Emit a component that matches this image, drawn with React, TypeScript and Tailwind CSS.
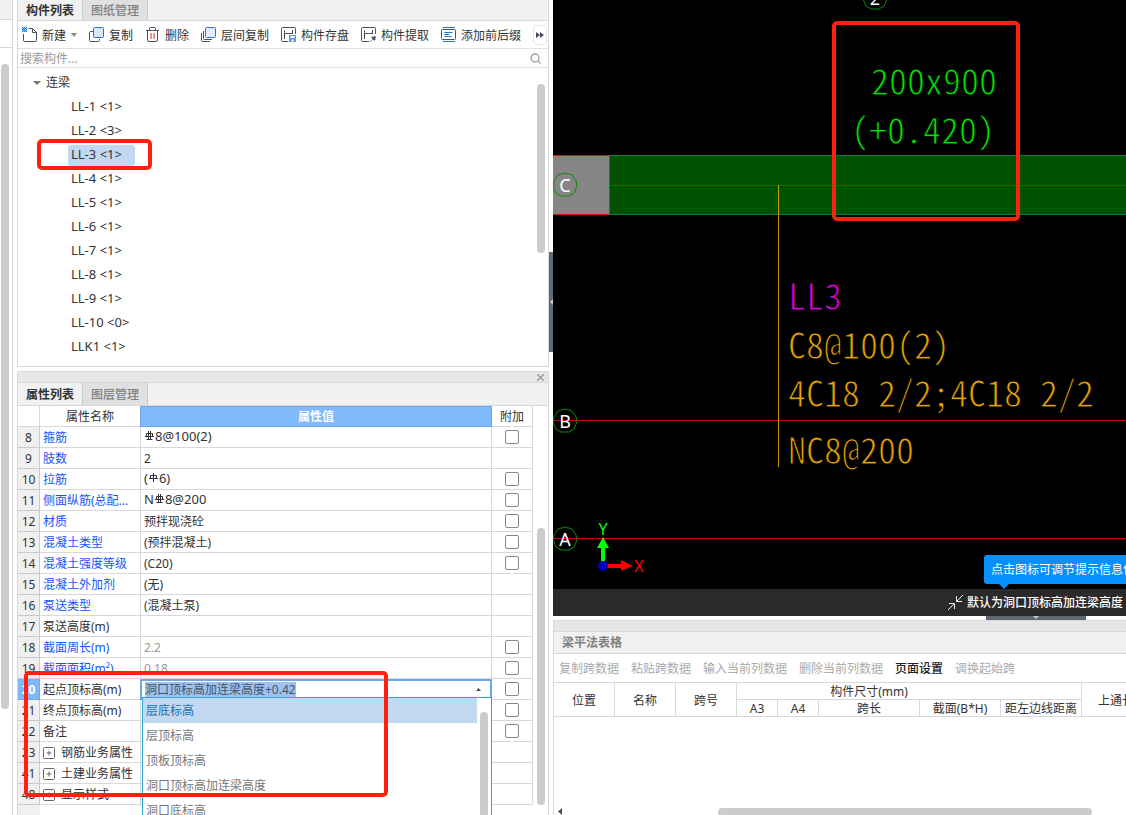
import { useEffect, useRef, useState } from 'react'
import type { ReactNode } from 'react'

const components = [
  'LL-1 <1>', 'LL-2 <3>', 'LL-3 <1>', 'LL-4 <1>', 'LL-5 <1>', 'LL-6 <1>',
  'LL-7 <1>', 'LL-8 <1>', 'LL-9 <1>', 'LL-10 <0>', 'LLK1 <1>',
]

interface PropertyRow {
  no: number
  name: string
  value?: ReactNode
  blue?: boolean
  muted?: boolean
  extra?: boolean
  group?: boolean
  editing?: boolean
}

const options = ['层底标高', '层顶标高', '顶板顶标高', '洞口顶标高加连梁高度', '洞口底标高']

// 钢筋等级符号
function Rebar({ grade }: { grade: 1 | 3 }) {
  return (
    <svg className="mx-px mb-[5px] inline-block h-[10px] w-[9px] align-middle" viewBox="0 0 9 10" fill="none" stroke="#333">
      <path d="M1.5 2.5h6v3h-6zM0 5.5h2M7 5.5h2" />
      {grade === 1 ? <path d="M4.5 0v9" /> : <path d="M3.5 0v9M5.5 0v9M1.5 8.5h6" />}
    </svg>
  )
}

const rows: PropertyRow[] = [
  { no: 8, name: '箍筋', value: <><Rebar grade={3} />8@100(2)</>, blue: true, extra: true },
  { no: 9, name: '肢数', value: '2', blue: true },
  { no: 10, name: '拉筋', value: <>(<Rebar grade={1} />6)</>, blue: true, extra: true },
  { no: 11, name: '侧面纵筋(总配...', value: <>N<Rebar grade={3} />8@200</>, blue: true, extra: true },
  { no: 12, name: '材质', value: '预拌现浇砼', blue: true, extra: true },
  { no: 13, name: '混凝土类型', value: '(预拌混凝土)', blue: true, extra: true },
  { no: 14, name: '混凝土强度等级', value: '(C20)', blue: true, extra: true },
  { no: 15, name: '混凝土外加剂', value: '(无)', blue: true },
  { no: 16, name: '泵送类型', value: '(混凝土泵)', blue: true },
  { no: 17, name: '泵送高度(m)' },
  { no: 18, name: '截面周长(m)', value: '2.2', blue: true, muted: true, extra: true },
  { no: 19, name: '截面面积(m²)', value: '0.18', blue: true, muted: true, extra: true },
  { no: 20, name: '起点顶标高(m)', editing: true, extra: true },
  { no: 21, name: '终点顶标高(m)', extra: true },
  { no: 22, name: '备注', extra: true },
  { no: 23, name: '钢筋业务属性', group: true },
  { no: 41, name: '土建业务属性', group: true },
  { no: 48, name: '显示样式', group: true },
]

function Icon({ children }: { children: ReactNode }) {
  return (
    <svg className="size-4 shrink-0" viewBox="0 0 16 16" fill="none" stroke="#4a5060">
      {children}
    </svg>
  )
}

const NewIcon = () => (
  <Icon>
    <path d="M6.5 1.500h4l4 4v8a1 1 0 0 1-1 1h-11a1 1 0 0 1-1-1V7M10.500 1.500v4h4" />
    <path d="M0 0h5v5H0z" fill="#a9cbf5" stroke="none" />
    <path d="M0 .5h1M2 .5h1M4 .5h1M1 1.500h1M3 1.500h1M0 2.500h1M2 2.500h1M4 2.500h1M1 3.500h1M3 3.500h1M0 4.500h1M2 4.500h1M4 4.500h1" stroke="#1a6fe0" />
  </Icon>
)

const CopyIcon = () => (
  <Icon>
    <path d="M4 4.500H1.500a1 1 0 0 0-1 1v8a1 1 0 0 0 1 1h8a1 1 0 0 0 1-1V12" />
    <rect x="4.500" y=".5" width="10" height="10" rx="1" fill="#dbe8fb" stroke="#2a73dc" />
  </Icon>
)

const TrashIcon = () => (
  <Icon>
    <path d="M1 3.500h13M4.500 3V1.500a1 1 0 0 1 1-1h4a1 1 0 0 1 1 1V3M2.500 4v9a1.500 1.500 0 0 0 1.500 1.500h7a1.500 1.500 0 0 0 1.500-1.500V4" />
    <path d="M6 6v6M9 6v6" stroke="#e02020" />
  </Icon>
)

const LayerCopyIcon = () => (
  <Icon>
    <path d="M.5 6v7.500a1 1 0 0 0 1 1H9M2.500 4v7.500a1 1 0 0 0 1 1H11" />
    <rect x="4.500" y=".5" width="10" height="10" rx="1" fill="#e3eefc" stroke="#2a73dc" />
  </Icon>
)

const SaveIcon = () => (
  <Icon>
    <path d="M7 14.500H1.500a1 1 0 0 1-1-1v-12a1 1 0 0 1 1-1h12a1 1 0 0 1 1 1V7M3.500 3v9M3.500 6.500h8M11.500 3v4" />
    <path d="M8 8h7v7H8z" fill="#5b9be8" stroke="none" />
    <path d="M9.500 9h4v2h-4zM10.500 12.500h2v2h-2z" fill="#fff" stroke="none" />
  </Icon>
)

const ExtractIcon = () => (
  <Icon>
    <path d="M8 14.500H1.500a1 1 0 0 1-1-1v-12a1 1 0 0 1 1-1h12a1 1 0 0 1 1 1V7M3.500 3v9M3.500 6.500h8M11.500 3v4" />
    <path d="M9 15l3-3" stroke="#5b9be8" />
    <path d="M11 10l3 3M12.500 11.500l2-2" strokeWidth="2" />
  </Icon>
)

const AffixIcon = () => (
  <Icon>
    <rect x=".5" y="2.500" width="14" height="10" rx="1" />
    <path d="M2 .5h12M2 14.500h12M3.500 5.500h8M3.500 7.500h5M3.500 9.500h7" stroke="#1878d8" />
  </Icon>
)

const tools = [
  { label: '复制', icon: <CopyIcon /> },
  { label: '删除', icon: <TrashIcon /> },
  { label: '层间复制', icon: <LayerCopyIcon /> },
  { label: '构件存盘', icon: <SaveIcon /> },
  { label: '构件提取', icon: <ExtractIcon /> },
  { label: '添加前后缀', icon: <AffixIcon /> },
]

function Tabs({ names }: { names: string[] }) {
  return (
    <div className="flex h-full items-stretch bg-[#f1f1f1]">
      {names.map((name, i) => (
        <button
          key={name}
          className={
            i === 0
              ? 'w-[65px] border-r border-[#c4c8cf] bg-[#f1f1f1] pt-[2px] font-bold text-[#333]'
              : 'w-[65px] border-r border-[#c4c8cf] bg-[#e0e0e0] pt-[2px] font-medium text-[#808080]'
          }
        >
          {name}
        </button>
      ))}
    </div>
  )
}

function ComponentPanel() {
  const [selected, setSelected] = useState('LL-3 <1>')

  return (
    <section className="flex h-[367px] shrink-0 flex-col border-x border-b border-[#d8d8d8] bg-white">
      <div className="h-[21px] border-b border-[#d8d8d8]">
        <Tabs names={['构件列表', '图纸管理']} />
      </div>
      <div className="flex h-7 items-center gap-3 border-b border-[#e0e0e0] pl-1">
        <button className="flex shrink-0 items-center gap-1">
          <NewIcon />
          <span className="pt-[2px]">新建</span>
          <svg className="ml-px h-1 w-[6px]" viewBox="0 0 6 4" fill="#888"><path d="M0 0h6L3 4z" /></svg>
        </button>
        {tools.map(tool => (
          <button key={tool.label} className="flex shrink-0 items-center gap-1">
            {tool.icon}
            <span className="pt-[2px]">{tool.label}</span>
          </button>
        ))}
        <button aria-label="更多" className="flex h-5 w-[14px] shrink-0 items-center justify-center rounded-sm border border-[#e6e6e6]">
          <svg className="h-[6px] w-2" viewBox="0 0 8 6" fill="#444c5c"><path d="M0 0l4 3-4 3zM4 0l4 3-4 3z" /></svg>
        </button>
      </div>
      <label className="flex h-[19px] shrink-0 items-center border-b border-[#e0e0e0] pr-[7px] pl-[2px]">
        <input
          type="text"
          aria-label="搜索构件"
          placeholder="搜索构件..."
          className="min-w-0 flex-1 pt-[2px] outline-none placeholder:text-[#999]"
        />
        <svg className="size-[11px]" viewBox="0 0 11 11" fill="none" stroke="#a0a0a0" strokeWidth="1.300">
          <circle cx="5" cy="5" r="4" />
          <path d="M8 8l2.500 2.500" />
        </svg>
      </label>
      <div className="flex min-h-0 flex-1">
        <div className="flex-1 pt-[3px]">
          <div className="flex h-6 items-center gap-[5px] pl-[15px]">
            <svg className="h-1 w-2" viewBox="0 0 8 4" fill="#777"><path d="M0 0h8L4 4z" /></svg>
            连梁
          </div>
          <ul className="text-[13px]">
            {components.map(name => (
              <li key={name} className="flex h-6 items-center pl-[50px]">
                <button
                  onClick={() => setSelected(name)}
                  className={
                    name === selected
                      ? 'h-[21px] w-[67px] rounded-[3px] bg-[#c2d8f0] pl-[3px] text-left whitespace-nowrap'
                      : 'h-[21px] w-[67px] rounded-[3px] pl-[3px] text-left whitespace-nowrap'
                  }
                >
                  {name}
                </button>
              </li>
            ))}
          </ul>
        </div>
        <div className="mt-4 mr-[3px] h-[169px] w-2 rounded-full bg-[#ccc]" />
      </div>
    </section>
  )
}

function ElevationEditor() {
  const [value, setValue] = useState('洞口顶标高加连梁高度+0.42')
  const ref = useRef<HTMLInputElement>(null)

  useEffect(() => {
    ref.current?.focus()
    ref.current?.select()
  }, [])

  return (
    <div className="relative h-[21px] border-2 border-[#6ba9ea] bg-white">
      <div className="flex h-full items-center pr-[9px] pl-[3px]">
        <input
          ref={ref}
          type="text"
          aria-label="起点顶标高"
          value={value}
          onChange={e => setValue(e.target.value)}
          className="h-4 min-w-0 flex-1 leading-4 caret-transparent outline-none selection:bg-[#9fc1ee] selection:text-[#44546a]"
        />
        <svg className="h-[3px] w-[5px]" viewBox="0 0 5 3" fill="#444c5c"><path d="M0 3h5L2.500 0z" /></svg>
      </div>
      <div className="absolute top-4 right-[-2px] left-0 z-10 flex h-[140px] border border-[#2fa4cf] bg-white">
        <ul className="flex-1">
          {options.map((option, i) => (
            <li key={option}>
              <button
                onClick={() => setValue(option)}
                className={
                  i === 0
                    ? 'h-[25px] w-full bg-[#c2d8f0] pl-[3px] text-left text-[#1a6fae]'
                    : 'h-[25px] w-full pl-[3px] text-left text-[#777]'
                }
              >
                {option}
              </button>
            </li>
          ))}
        </ul>
        <div className="mt-[14px] mr-[3px] ml-[3px] w-2 rounded-full bg-[#ccc]" />
      </div>
    </div>
  )
}

function PropertyPanel() {
  return (
    <section className="mt-1 flex min-h-0 flex-1 flex-col border-x border-t border-[#d8d8d8] bg-white">
      <div className="flex h-[11px] shrink-0 items-center justify-end border-b border-[#d8d8d8] bg-[#e7e7e7] pr-1">
        <button aria-label="关闭">
          <svg className="size-[7px]" viewBox="0 0 7 7" stroke="#999" strokeWidth="1.300"><path d="M0 0l7 7M7 0L0 7" /></svg>
        </button>
      </div>
      <div className="h-[23px] shrink-0 border-b border-[#d8d8d8]">
        <Tabs names={['属性列表', '图层管理']} />
      </div>
      <div className="flex min-h-0 flex-1">
        <div className="min-w-0 flex-1">
          <table className="w-full table-fixed border-separate border-spacing-0">
            <colgroup>
              <col className="w-[22px]" />
              <col className="w-[100px]" />
              <col />
              <col className="w-[41px]" />
            </colgroup>
            <thead>
              <tr className="h-[21px]">
                <th className="border-r border-b border-[#d8d8d8] p-0" />
                <th className="border-b border-[#d8d8d8] p-0 pt-[2px] font-normal">属性名称</th>
                <th className="border border-[#6ba9ea] bg-[#80bafa] p-0 font-bold text-white">属性值</th>
                <th className="border-r border-b border-[#d8d8d8] p-0 pt-[2px] font-normal">附加</th>
              </tr>
            </thead>
            <tbody>
              {rows.map(row => (
                <tr key={row.no} className="h-[21px]">
                  <td
                    className={
                      row.editing
                        ? 'border-r border-b border-[#6ba9ea] bg-[#7fb8f8] p-0 pt-[2px] text-center font-bold text-white'
                        : 'border-r border-b border-[#c9c9c9] bg-[#f0f0f0] p-0 pt-[2px] text-center'
                    }
                  >
                    {row.no}
                  </td>
                  <td
                    className={
                      row.blue
                        ? 'truncate border-b border-[#d8d8d8] p-0 pt-[2px] pl-[3px] text-[#1455ff]'
                        : 'truncate border-b border-[#d8d8d8] p-0 pt-[2px] pl-[3px]'
                    }
                  >
                    {row.group ? (
                      <button className="flex items-center gap-[6px]">
                        <svg className="size-3" viewBox="0 0 12 12" fill="none" stroke="#666">
                          <rect x=".5" y=".5" width="11" height="11" rx="1" />
                          <path d="M3.500 6h5M6 3.500v5" />
                        </svg>
                        {row.name}
                      </button>
                    ) : row.name}
                  </td>
                  {row.editing ? (
                    <td className="p-0"><ElevationEditor /></td>
                  ) : (
                    <td
                      className={
                        row.muted
                          ? 'border-x border-b border-[#d8d8d8] p-0 pt-[2px] pl-[3px] leading-4 text-[#999]'
                          : typeof row.value === 'string'
                            ? 'border-x border-b border-[#d8d8d8] p-0 pt-[2px] pl-[3px] leading-4'
                            : 'border-x border-b border-[#d8d8d8] p-0 pl-[3px] text-[13px] leading-4'
                      }
                    >
                      {row.value}
                    </td>
                  )}
                  <td className="border-r border-b border-[#d8d8d8] p-0">
                    {row.extra && (
                      <input
                        type="checkbox"
                        aria-label={`${row.name} 附加`}
                        className="mx-auto block size-[14px] appearance-none rounded-[2px] border border-[#888] bg-white"
                      />
                    )}
                  </td>
                </tr>
              ))}
              <tr className="h-6">
                <td className="bg-[#f0f0f0] p-0" />
              </tr>
            </tbody>
          </table>
        </div>
        <div className="mt-[122px] mr-[3px] ml-1 h-[277px] w-2 shrink-0 rounded-full bg-[#ccc]" />
      </div>
    </section>
  )
}

function AxisMark({ x, y, label }: { x: number; y: number; label: string }) {
  return (
    <g>
      <path
        transform={`translate(${x} ${y})`}
        d="M0-12L7-10L11-4L12 1L9 8L4 11L-4 11L-9 8L-12 1L-11-4L-7-10Z"
        fill="none"
        stroke="#0a8a0a"
      />
      <text x={x} y={y + 7} textAnchor="middle" fill="#fff" className="text-lg">{label}</text>
    </g>
  )
}

function Drawing() {
  return (
    <svg className="block h-full w-full bg-black" role="img" aria-label="连梁平面图">
      <rect x="0" y="155" width="57" height="60" fill="#858585" />
      <rect x="56.500" y="155.500" width="110%" height="59" fill="#005200" stroke="#008058" />
      <path d="M0 155.500h56M0 214.500h56" stroke="#e01010" />
      <line x1="57" y1="185.500" x2="100%" y2="185.500" stroke="#c01800" />
      <line x1="0" y1="420.500" x2="100%" y2="420.500" stroke="#c80000" />
      <line x1="0" y1="538.500" x2="100%" y2="538.500" stroke="#c80000" />
      <path d="M225.500 185v282" stroke="#c89600" />
      <AxisMark x={12} y={185} label="C" />
      <AxisMark x={12} y={421} label="B" />
      <AxisMark x={12} y={539} label="A" />
      <AxisMark x={322} y={-2} label="2" />

      {/* 标注文字用黑色描边收细笔画 */}
      <g className="font-['Noto_Sans_Mono_CJK_SC','Liberation_Mono',monospace] text-[36px]" stroke="#000" strokeWidth="1">
        <text x="318" y="95" fill="#00e000">200x900</text>
        <text x="298" y="144" fill="#00e000">(+0.420)</text>
        <text x="235" y="310" fill="#e000e0">LL3</text>
        <g fill="#e6a200">
          <text x="235" y="359">C8@100(2)</text>
          <text x="235" y="407">4C18 2/2;4C18 2/2</text>
          <text x="235" y="464">NC8@200</text>
        </g>
      </g>

      <path d="M48 566h4v-18h4L50 537l-6 11h4z" fill="#0f0" />
      <path d="M54 564h14v-4l12 6-12 5v-3H54z" fill="#f00" />
      <circle cx="50" cy="566" r="5" fill="#0000c0" />
      <text x="50" y="535" textAnchor="middle" fill="#0f0" className="text-base">Y</text>
      <text x="86" y="572" textAnchor="middle" fill="#f00" className="text-base">X</text>
    </svg>
  )
}

function Viewport() {
  return (
    <section className="relative">
      <div className="h-[589px]"><Drawing /></div>
      <div className="flex h-[27px] items-center justify-end gap-1 bg-[#2a2a2a] pr-[3px] font-medium text-white">
        <svg className="size-[15px]" viewBox="0 0 15 15" fill="none" stroke="#eee">
          <path d="M15 0L9 6M8.500 1v5.500H14M0 15l6-6M1 8.500h5.500V14" />
        </svg>
        <span className="pt-px">默认为洞口顶标高加连梁高度</span>
      </div>
      <div className="absolute right-0 bottom-[32px] h-[29px] w-[142px] rounded-l-[3px] bg-[#0690ff] pl-[7px]">
        <p className="overflow-hidden leading-[29px] whitespace-nowrap text-white">点击图标可调节提示信息位置</p>
        <svg className="absolute top-full left-[15px] h-[5px] w-[10px]" viewBox="0 0 10 5" fill="#0690ff"><path d="M0 0h10L5 5z" /></svg>
      </div>
    </section>
  )
}

const spanTools = ['复制跨数据', '粘贴跨数据', '输入当前列数据', '删除当前列数据', '页面设置', '调换起始跨']

const cell = 'border-r border-b border-[#d8d8d8] p-0 pt-px leading-[15px] font-normal whitespace-nowrap'
const tallCell = 'border-r border-b border-[#d8d8d8] p-0 pt-[2px] font-normal whitespace-nowrap'

function BeamTable() {
  return (
    <section className="flex min-h-0 flex-1 flex-col border-t border-l border-[#d8d8d8] bg-white">
      <div className="h-[11px] border-b border-[#d8d8d8] bg-[#e7e7e7]" />
      <h2 className="h-[22px] border-b border-[#d8d8d8] bg-[#f1f1f1] pl-2 leading-[22px] font-bold text-[#808080]">梁平法表格</h2>
      <div className="flex h-7 items-center gap-3 pt-[2px] pl-[5px]">
        {spanTools.map(name => (
          <button
            key={name}
            disabled={name !== '页面设置'}
            className="shrink-0 font-medium text-[#222] disabled:font-normal disabled:text-[#aaa]"
          >
            {name}
          </button>
        ))}
      </div>
      <div className="flex-1 overflow-hidden">
        <table className="w-[609px] table-fixed border-separate border-spacing-0 border-t border-[#d8d8d8]">
          <colgroup>
            <col className="w-[61px]" />
            <col className="w-[61px]" />
            <col className="w-[61px]" />
            <col className="w-[41px]" />
            <col className="w-[41px]" />
            <col className="w-[101px]" />
            <col className="w-[81px]" />
            <col className="w-[81px]" />
            <col className="w-[81px]" />
          </colgroup>
          <thead>
            <tr className="h-[17px]">
              <th rowSpan={2} className={tallCell}>位置</th>
              <th rowSpan={2} className={tallCell}>名称</th>
              <th rowSpan={2} className={tallCell}>跨号</th>
              <th colSpan={5} className={cell}>
                <span className="pr-20">构件尺寸(mm)</span>
              </th>
              <th rowSpan={2} className={tallCell}>上通长筋</th>
            </tr>
            <tr className="h-[17px]">
              <th className={cell}>A3</th>
              <th className={cell}>A4</th>
              <th className={cell}>跨长</th>
              <th className={cell}>截面(B*H)</th>
              <th className={cell}>距左边线距离</th>
            </tr>
          </thead>
        </table>
      </div>
      <div className="flex h-[7px] shrink-0 overflow-hidden pr-[34px] pl-1">
        <svg className="h-[7px] w-1" viewBox="0 0 4 7" fill="#444c5c"><path d="M4 0v7L0 3.500z" /></svg>
        <div className="ml-[156px] h-2 flex-1 rounded-full bg-[#ccc]" />
      </div>
    </section>
  )
}

export default function App() {
  return (
    <div className="relative flex h-screen overflow-hidden bg-white font-['Noto_Sans','Noto_Sans_CJK_SC',sans-serif] text-xs text-[#333]">
      <aside className="flex w-[13px] shrink-0 flex-col border-r border-[#d8d8d8]">
        <div className="h-5 shrink-0 border-b border-[#d8d8d8] bg-[#f1f1f1]" />
        <div className="h-7 shrink-0 border-b border-[#d8d8d8]" />
        <div className="mt-4 ml-px h-[645px] w-2 rounded-full bg-[#ccc]" />
      </aside>

      <div className="ml-1 flex w-[532px] shrink-0 flex-col">
        <ComponentPanel />
        <PropertyPanel />
      </div>

      {/* 左右分隔条 */}
      <div className="w-1 shrink-0 pt-[252px]">
        <div className="flex h-[100px] items-center justify-end bg-[#5f6973]">
          <svg className="h-[6px] w-[3px]" viewBox="0 0 3 6" fill="#c8ccd0"><path d="M3 0v6L0 3z" /></svg>
        </div>
      </div>

      <main className="flex min-w-0 flex-1 flex-col">
        <Viewport />
        <div className="flex h-1 shrink-0 justify-end pr-10">
          <div className="flex w-[100px] justify-center bg-[#5f6973]">
            <svg className="h-[3px] w-[6px]" viewBox="0 0 6 3" fill="#c8ccd0"><path d="M0 0h6L3 3z" /></svg>
          </div>
        </div>
        <BeamTable />
      </main>

      {/* 红色标记框 */}
      <div className="pointer-events-none absolute top-[139px] left-[37px] z-20 h-[31px] w-[115px] rounded-[5px] border-4 border-[#ff2010]" />
      <div className="pointer-events-none absolute top-[671px] left-6 z-20 h-[126px] w-[364px] rounded-[5px] border-4 border-[#ff2010]" />
      <div className="pointer-events-none absolute top-[21px] left-[832px] z-20 h-[200px] w-[188px] rounded-[5px] border-4 border-[#ff2010]" />
    </div>
  )
}
